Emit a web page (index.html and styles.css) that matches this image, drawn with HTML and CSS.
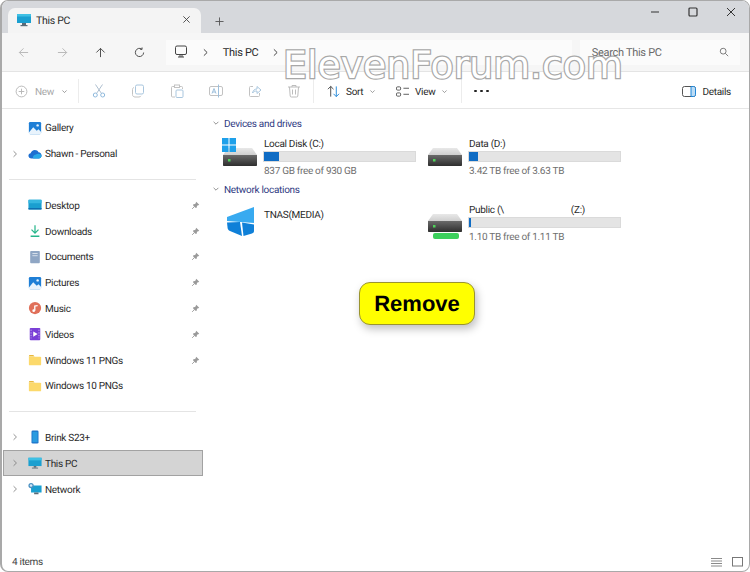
FILE: index.html
```html
<!DOCTYPE html>
<html lang="en">
<head>
    <meta charset="UTF-8">
    <title>This PC</title>
    <link rel="stylesheet" href="styles.css">
</head>
<body>

    <svg class="defs" width="0" height="0">
        <defs>
            <symbol id="chev" viewBox="0 0 10 10"><path d="M3.2 1.5 6.8 5 3.2 8.5" fill="none" stroke="currentColor" stroke-width="1"/></symbol>
            <symbol id="down" viewBox="0 0 10 10"><path d="M2 3.5 5 6.5 8 3.5" fill="none" stroke="currentColor" stroke-width="1"/></symbol>
            <symbol id="pin" viewBox="0 0 12 12"><path d="M7 1 11 5 9.8 5.6 8 6.4 7.6 9 5.8 9 3 6.2 3 4.4 5.6 4 6.4 2.2Z" fill="#9a9a9a"/><path d="M4.2 7.8 1.5 10.5" stroke="#9a9a9a" stroke-width="1.2"/></symbol>
            <symbol id="folder" viewBox="0 0 16 14"><path d="M1 2.5C1 1.7 1.5 1.2 2.2 1.2H6L7.6 3H1Z" fill="#e8b83c"/><path d="M1 3.2H14C14.6 3.2 15 3.6 15 4.2V12C15 12.6 14.6 13 14 13H2C1.4 13 1 12.6 1 12Z" fill="#fcd96b"/></symbol>
            <symbol id="picture" viewBox="0 0 16 16"><rect x="1" y="1" width="14" height="14" rx="1.5" fill="#1f7fd6"/><path d="M1 13 6 7l4 4 2-1.5 3 3V15H1Z" fill="#e8f3fc"/><circle cx="11" cy="5" r="1.4" fill="#e8f3fc"/></symbol>
            <linearGradient id="roof" x1="0" y1="0" x2="0" y2="1"><stop offset="0" stop-color="#e8e8e8"/><stop offset="1" stop-color="#cfcfcf"/></linearGradient>
            <linearGradient id="front" x1="0" y1="0" x2="0" y2="1"><stop offset="0" stop-color="#6a6a6a"/><stop offset="1" stop-color="#2e2e2e"/></linearGradient>
            <symbol id="drive" viewBox="0 0 34 18"><path d="M5 0H29L34 7H0Z" fill="url(#roof)"/><path d="M0 7H34V17C34 17.6 33.6 18 33 18H1C.4 18 0 17.6 0 17Z" fill="url(#front)"/><rect x="5" y="11" width="2.5" height="2.5" fill="#4fd35a"/></symbol>
        </defs>
    </svg>

    <div class="window">

        <!-- Title bar -->
        <div class="titlebar">
            <div class="tab">
                <svg class="tab-icon" viewBox="0 0 16 14"><rect x="1" y="1" width="14" height="9" fill="#1a9fd0"/><path d="M1 1H15V3.5H1Z" fill="#3fc0e4"/><rect x="6" y="10" width="4" height="2" fill="#5a6b78"/><rect x="4.5" y="12" width="7" height="1.2" fill="#5a6b78"/></svg>
                <span class="tab-title">This PC</span>
                <svg class="tab-close" viewBox="0 0 10 10"><path d="M1.5 1.5 8.5 8.5M8.5 1.5 1.5 8.5" stroke="#444" stroke-width="1"/></svg>
            </div>
            <svg class="tab-new" viewBox="0 0 10 10"><path d="M5 .5V9.5M.5 5H9.5" stroke="#555" stroke-width="1"/></svg>
            <div class="caption">
                <svg viewBox="0 0 10 10"><path d="M1 5H9" stroke="#333" stroke-width="1"/></svg>
                <svg viewBox="0 0 10 10"><rect x="1" y="1" width="8" height="8" rx="1" fill="none" stroke="#333" stroke-width="1.2"/></svg>
                <svg viewBox="0 0 10 10"><path d="M1 1 9 9M9 1 1 9" stroke="#333" stroke-width="1"/></svg>
            </div>
        </div>

        <!-- Address row -->
        <div class="addressrow">
            <div class="navbtn"><svg viewBox="0 0 12 12"><path d="M11 6H1.5M6 1.5 1.5 6 6 10.5" fill="none" stroke="#b4b4b4"/></svg></div>
            <div class="navbtn"><svg viewBox="0 0 12 12"><path d="M1 6H10.5M6 1.5 10.5 6 6 10.5" fill="none" stroke="#b4b4b4"/></svg></div>
            <div class="navbtn"><svg viewBox="0 0 12 12"><path d="M6 11V1.5M1.5 6 6 1.5 10.5 6" fill="none" stroke="#444"/></svg></div>
            <div class="navbtn"><svg viewBox="0 0 12 12"><path d="M10.5 6A4.5 4.5 0 1 1 8.5 2.2M8.8 .5V2.6H6.7" fill="none" stroke="#444"/></svg></div>
            <div class="addressbox">
                <svg class="addr-pc" viewBox="0 0 14 14"><rect x="1.5" y="1" width="11" height="8.5" rx="1.5" fill="none" stroke="#444" stroke-width="1"/><path d="M4 12H10M6 9.5V12M8 9.5V12" stroke="#444" stroke-width="1"/></svg>
                <svg class="addr-chev" viewBox="0 0 10 10"><use href="#chev"/></svg>
                <span>This PC</span>
                <svg class="addr-chev" viewBox="0 0 10 10"><use href="#chev"/></svg>
            </div>
            <div class="searchbox">
                <span>Search This PC</span>
                <svg viewBox="0 0 12 12"><circle cx="5" cy="5" r="3.5" fill="none" stroke="#666"/><path d="M7.6 7.6 11 11" stroke="#666"/></svg>
            </div>
        </div>

        <!-- Command bar -->
        <div class="toolbar">
            <div class="tool-new">
                <svg class="tool-icon" viewBox="0 0 14 14"><circle cx="7" cy="7" r="5.8" fill="none" stroke="#b5b5b5"/><path d="M7 4V10M4 7H10" stroke="#b5b5b5"/></svg>
                <span>New</span>
                <svg class="drop" viewBox="0 0 10 10"><use href="#down"/></svg>
            </div>
            <div class="sep"></div>
            <div class="tool"><svg viewBox="0 0 14 14"><path d="M3.5 .5 9.5 9.5M10.5 .5 4.5 9.5" fill="none" stroke="#aebfd0"/><circle cx="3.3" cy="11" r="2" fill="none" stroke="#8fb9dc"/><circle cx="10.7" cy="11" r="2" fill="none" stroke="#8fb9dc"/></svg></div>
            <div class="tool"><svg viewBox="0 0 14 14"><rect x="4.5" y="1" width="8" height="9" rx="1.5" fill="none" stroke="#a9c6de"/><path d="M3 3.5C1.8 4 1.5 4.5 1.5 5.5V10.5C1.5 12 2.5 13 4 13H8C9 13 9.7 12.5 10 11.8" fill="none" stroke="#c2c2c2"/></svg></div>
            <div class="tool"><svg viewBox="0 0 14 14"><path d="M4.5 2.5H2.5C1.8 2.5 1.5 2.8 1.5 3.5V12C1.5 12.7 1.8 13 2.5 13H5M9.5 2.5H11.5C12.2 2.5 12.5 2.8 12.5 3.5V5" fill="none" stroke="#c2c2c2"/><rect x="4.5" y="1" width="5" height="2.5" fill="none" stroke="#c2c2c2"/><rect x="6" y="6" width="7" height="7.5" rx="1" fill="none" stroke="#a9c6de"/></svg></div>
            <div class="tool"><svg viewBox="0 0 14 14"><rect x=".5" y="2.5" width="13" height="9" rx="1.5" fill="none" stroke="#c2c2c2"/><path d="M3 9.5 5 4.5 7 9.5M3.8 8H6.2" fill="none" stroke="#9dbfdc"/><path d="M9.5 .5V13.5" stroke="#9dbfdc"/></svg></div>
            <div class="tool"><svg viewBox="0 0 14 14"><path d="M5 2.5H2.5C1.8 2.5 1.5 2.8 1.5 3.5V11.5C1.5 12.2 1.8 12.5 2.5 12.5H10.5C11.2 12.5 11.5 12.2 11.5 11.5V9" fill="none" stroke="#c2c2c2"/><path d="M4.5 9C5 6.5 6.5 5 9 5V2.5L13 6 9 9.5V7C7 7 5.5 7.5 4.5 9Z" fill="none" stroke="#a9c6de"/></svg></div>
            <div class="tool"><svg viewBox="0 0 14 14"><path d="M1 3H13M5 3V1.5H9V3M2.5 3 3.2 12C3.3 12.8 3.7 13 4.3 13H9.7C10.3 13 10.7 12.8 10.8 12L11.5 3M5.5 5.5V10.5M8.5 5.5V10.5" fill="none" stroke="#bcbcbc"/></svg></div>
            <div class="sep"></div>
            <div class="tool-label tool-sort">
                <svg class="tool-icon" viewBox="0 0 14 14"><path d="M4 12.5V1.5M1 4.5 4 1.5 7 4.5" fill="none" stroke="#444"/><path d="M10 1.5V12.5M7 9.5 10 12.5 13 9.5" fill="none" stroke="#1f86d8"/></svg>
                <span>Sort</span>
                <svg class="drop" viewBox="0 0 10 10"><use href="#down"/></svg>
            </div>
            <div class="tool-label tool-view">
                <svg class="tool-icon" viewBox="0 0 14 14"><rect x=".5" y="2" width="4.5" height="3.5" rx="1.2" fill="none" stroke="#555"/><rect x=".5" y="8.5" width="4.5" height="3.5" rx="1.2" fill="none" stroke="#555"/><path d="M8 3.5H14M8 10H14" stroke="#555"/></svg>
                <span>View</span>
                <svg class="drop" viewBox="0 0 10 10"><use href="#down"/></svg>
            </div>
            <div class="sep"></div>
            <div class="tool-more"><i></i><i></i><i></i></div>
            <div class="tool-details">
                <svg class="tool-icon" viewBox="0 0 14 12"><rect x=".5" y="1" width="13" height="10" rx="2" fill="none" stroke="#555"/><path d="M9 1H11.5C12.8 1 13.5 1.8 13.5 3V9C13.5 10.2 12.8 11 11.5 11H9Z" fill="#bcdcf5" stroke="#1f86d8"/></svg>
                <span>Details</span>
            </div>
        </div>

        <div class="main">

            <!-- Navigation pane -->
            <div class="sidebar">
                <div class="navrow">
                    <span class="expander"></span>
                    <svg class="navicon" viewBox="0 0 16 16"><use href="#picture"/></svg>
                    <span class="navname">Gallery</span>
                </div>
                <div class="navrow">
                    <svg class="expander" viewBox="0 0 10 10"><use href="#chev"/></svg>
                    <svg class="navicon" viewBox="0 0 16 16"><path d="M4 13C2 13 .5 11.8 .5 10C.5 8.4 1.7 7.4 3 7.2 3.7 5 5.5 3.5 7.8 3.5 9.8 3.5 11.3 4.5 12 6 14 6.2 15.5 7.8 15.5 9.7 15.5 11.8 14 13 12.3 13Z" fill="#1d6fd1"/><path d="M6 13C5 11 6.3 8.7 9 8.5 11 7 15 7.5 15.5 10 15.5 11.8 14 13 12.3 13Z" fill="#29a8e8"/></svg>
                    <span class="navname">Shawn - Personal</span>
                </div>
                <div class="navdivider"></div>
                <div class="navrow">
                    <span class="expander"></span>
                    <svg class="navicon" viewBox="0 0 16 16"><rect x=".5" y="2" width="15" height="11" rx="1" fill="#1a9fd0"/><path d="M.5 2H15.5V6H.5Z" fill="#36b7e0"/><path d="M.5 11.5H15.5V13H.5Z" fill="#0f6fb0"/></svg>
                    <span class="navname">Desktop</span>
                    <svg class="pin" viewBox="0 0 12 12"><use href="#pin"/></svg>
                </div>
                <div class="navrow">
                    <span class="expander"></span>
                    <svg class="navicon" viewBox="0 0 16 16"><path d="M8 1.5V10M4 6.5 8 10.5 12 6.5" fill="none" stroke="#25b58a" stroke-width="1.4"/><path d="M3 14H13" stroke="#25b58a" stroke-width="1.5"/></svg>
                    <span class="navname">Downloads</span>
                    <svg class="pin" viewBox="0 0 12 12"><use href="#pin"/></svg>
                </div>
                <div class="navrow">
                    <span class="expander"></span>
                    <svg class="navicon" viewBox="0 0 16 16"><rect x="2.5" y="1" width="11" height="14" rx="1" fill="#8fa6c4"/><path d="M5 4H11M5 6.5H11" stroke="#dfe6ef"/></svg>
                    <span class="navname">Documents</span>
                    <svg class="pin" viewBox="0 0 12 12"><use href="#pin"/></svg>
                </div>
                <div class="navrow">
                    <span class="expander"></span>
                    <svg class="navicon" viewBox="0 0 16 16"><use href="#picture"/></svg>
                    <span class="navname">Pictures</span>
                    <svg class="pin" viewBox="0 0 12 12"><use href="#pin"/></svg>
                </div>
                <div class="navrow">
                    <span class="expander"></span>
                    <svg class="navicon" viewBox="0 0 16 16"><circle cx="8" cy="8" r="7" fill="#e0705a"/><path d="M7 11V5L11 4.5V6L8.5 6.3V11" fill="#fff"/><circle cx="6.5" cy="11" r="1.5" fill="#fff"/></svg>
                    <span class="navname">Music</span>
                    <svg class="pin" viewBox="0 0 12 12"><use href="#pin"/></svg>
                </div>
                <div class="navrow">
                    <span class="expander"></span>
                    <svg class="navicon" viewBox="0 0 16 16"><rect x="2" y="1" width="12" height="14" rx="1" fill="#7a3fd6"/><path d="M6 5 11 8 6 11Z" fill="#fff"/><path d="M3.5 3V13M12.5 3V13" stroke="#c9b2f0" stroke-dasharray="1.5 1.5"/></svg>
                    <span class="navname">Videos</span>
                    <svg class="pin" viewBox="0 0 12 12"><use href="#pin"/></svg>
                </div>
                <div class="navrow">
                    <span class="expander"></span>
                    <svg class="navicon" viewBox="0 0 16 14"><use href="#folder"/></svg>
                    <span class="navname">Windows 11 PNGs</span>
                    <svg class="pin" viewBox="0 0 12 12"><use href="#pin"/></svg>
                </div>
                <div class="navrow">
                    <span class="expander"></span>
                    <svg class="navicon" viewBox="0 0 16 14"><use href="#folder"/></svg>
                    <span class="navname">Windows 10 PNGs</span>
                </div>
                <div class="navdivider"></div>
                <div class="navrow">
                    <svg class="expander" viewBox="0 0 10 10"><use href="#chev"/></svg>
                    <svg class="navicon" viewBox="0 0 16 16"><rect x="4" y=".5" width="8" height="15" rx="1.5" fill="#1d72c9"/><rect x="5" y="2" width="6" height="12" fill="#2a9be0"/></svg>
                    <span class="navname">Brink S23+</span>
                </div>
                <div class="navrow selected">
                    <svg class="expander" viewBox="0 0 10 10"><use href="#chev"/></svg>
                    <svg class="navicon" viewBox="0 0 16 14"><rect x=".5" y="1" width="15" height="9.5" fill="#1a9fd0"/><path d="M.5 1H15.5V4H.5Z" fill="#3fc0e4"/><rect x="6.5" y="10.5" width="3" height="1.8" fill="#5a6b78"/><rect x="4.5" y="12.3" width="7" height="1" fill="#5a6b78"/></svg>
                    <span class="navname">This PC</span>
                </div>
                <div class="navrow">
                    <svg class="expander" viewBox="0 0 10 10"><use href="#chev"/></svg>
                    <svg class="navicon" viewBox="0 0 16 16"><rect x="3.5" y="4" width="12" height="8" fill="#1a9fd0"/><rect x="7" y="12" width="5" height="2" fill="#5a6b78"/><circle cx="3.5" cy="4" r="3" fill="#4a90c2"/><circle cx="3.5" cy="4" r="1.5" fill="#d5e8f5"/></svg>
                    <span class="navname">Network</span>
                </div>
            </div>

            <!-- Content -->
            <div class="content">
                <div class="group">
                    <svg viewBox="0 0 10 10"><use href="#down"/></svg>
                    <span>Devices and drives</span>
                </div>
                <div class="tiles">
                    <div class="tile">
                        <div class="tile-icon">
                            <svg class="winlogo" viewBox="0 0 14 14"><path d="M0 0H6.5V6.5H0ZM7.5 0H14V6.5H7.5ZM0 7.5H6.5V14H0ZM7.5 7.5H14V14H7.5Z" fill="#1ea0ea"/></svg>
                            <svg class="drive" viewBox="0 0 34 18"><use href="#drive"/></svg>
                        </div>
                        <div class="tile-text">
                            <div class="tile-name">Local Disk (C:)</div>
                            <div class="bar"><div class="bar-fill" style="width: 10%"></div></div>
                            <div class="tile-free">837 GB free of 930 GB</div>
                        </div>
                    </div>
                    <div class="tile">
                        <div class="tile-icon">
                            <svg class="drive" viewBox="0 0 34 18"><use href="#drive"/></svg>
                        </div>
                        <div class="tile-text">
                            <div class="tile-name">Data (D:)</div>
                            <div class="bar"><div class="bar-fill" style="width: 6%"></div></div>
                            <div class="tile-free">3.42 TB free of 3.63 TB</div>
                        </div>
                    </div>
                </div>
                <div class="group">
                    <svg viewBox="0 0 10 10"><use href="#down"/></svg>
                    <span>Network locations</span>
                </div>
                <div class="tiles">
                    <div class="tile">
                        <div class="tile-icon tile-icon-nas">
                            <svg class="nas" viewBox="0 0 27 29"><path d="M0 10 27 0V16L0 14Z" fill="#38aaf0"/><path d="M0 15.5 13 15 15 29 3 24C1.5 23.3 .8 22.5 .6 21Z" fill="#0f80d8"/><path d="M15 15.5 27 17.5V24C27 25.5 26 26 25 26.5L16.5 29Z" fill="#0f80d8"/></svg>
                        </div>
                        <div class="tile-text tile-text-nas">
                            <div class="tile-name">TNAS(MEDIA)</div>
                        </div>
                    </div>
                    <div class="tile">
                        <div class="tile-icon">
                            <svg class="drive" viewBox="0 0 34 18"><use href="#drive"/></svg>
                            <div class="netbar"></div>
                        </div>
                        <div class="tile-text">
                            <div class="tile-name">Public (\<span class="redact"></span>(Z:)</div>
                            <div class="bar"><div class="bar-fill" style="width: 1.5%"></div></div>
                            <div class="tile-free">1.10 TB free of 1.11 TB</div>
                        </div>
                    </div>
                </div>
            </div>
        </div>

        <!-- Status bar -->
        <div class="statusbar">
            <span>4 items</span>
            <div class="viewbtns">
                <svg viewBox="0 0 11 10"><path d="M0 1.5H11M0 4H11M0 6.5H11M0 9H11" stroke="#8a8a8a"/></svg>
                <svg viewBox="0 0 11 10"><rect x=".5" y=".5" width="10" height="8.5" fill="none" stroke="#777"/></svg>
            </div>
        </div>

        <div class="watermark">ElevenForum.com</div>
        <div class="callout">Remove</div>
    </div>

</body>
</html>
```

FILE: styles.css
```css
body {
    margin: 0;
    padding: 0;
    background-color: #fff;
    font-family: Roboto, "Noto Sans", sans-serif;
    font-size: 10px;
    letter-spacing: -0.3px;
    color: #2a2a2a;
    text-rendering: geometricPrecision;
}

.defs {
    position: absolute;
}

svg {
    display: block;
    flex-shrink: 0;
}

.window {
    position: relative;
    width: 750px;
    height: 572px;
    box-sizing: border-box;
    display: flex;
    flex-direction: column;
    border: 1px solid #a9a9a9;
    border-left: 2px solid #a9a9a9;
    border-radius: 8px;
    overflow: hidden;
    background-color: #fff;
}

/* title bar */
.titlebar {
    height: 32px;
    flex-shrink: 0;
    display: flex;
    align-items: flex-end;
    padding-left: 6px;
    background-color: #d6d8dc;
}

.tab {
    width: 193px;
    height: 25px;
    box-sizing: border-box;
    display: flex;
    align-items: center;
    padding: 0 10px 2px 8px;
    background-color: #f4f4f4;
    border-radius: 7px 7px 0 0;
}

.tab-icon {
    width: 16px;
    height: 14px;
}

.tab-title {
    margin-left: 4px;
    padding-top: 2px;
    flex: 1;
    font-size: 10.5px;
}

.tab-close {
    width: 9px;
    height: 9px;
}

.tab-new {
    width: 9px;
    height: 9px;
    margin: 0 0 7px 14px;
}

.caption {
    margin-left: auto;
    align-self: flex-start;
    display: flex;
    gap: 28px;
    padding: 6px 13px 0 0;
}

.caption svg {
    width: 10px;
    height: 10px;
}

/* address row */
.addressrow {
    height: 39px;
    flex-shrink: 0;
    box-sizing: border-box;
    display: flex;
    align-items: center;
    padding: 0 9px 0 2px;
    background-color: #f6f6f6;
    border-bottom: 1px solid #e4e4e4;
}

.navbtn {
    width: 38.7px;
    display: flex;
    justify-content: center;
}

.navbtn svg {
    width: 11px;
    height: 11px;
}

.addressbox {
    width: 406px;
    height: 25px;
    margin-left: 7px;
    display: flex;
    align-items: center;
    padding-left: 8px;
    box-sizing: border-box;
    background-color: #fbfbfb;
    font-size: 11px;
}

.addr-pc {
    width: 14px;
    height: 14px;
}

.addr-chev {
    width: 9px;
    height: 9px;
    margin: 0 13px;
    color: #333;
}

.searchbox {
    flex: 1;
    height: 25px;
    margin-left: 8px;
    display: flex;
    align-items: center;
    justify-content: space-between;
    padding: 0 11px 0 12px;
    box-sizing: border-box;
    background-color: #fbfbfb;
    color: #6a6a6a;
    font-size: 11px;
}

.searchbox span {
    position: relative;
    z-index: 2;
}

.searchbox svg {
    width: 10px;
    height: 10px;
}

/* command bar */
.toolbar {
    height: 37px;
    flex-shrink: 0;
    box-sizing: border-box;
    display: flex;
    align-items: center;
    padding-top: 2px;
    background-color: #fff;
    border-bottom: 1px solid #e6e6e6;
}

.toolbar span {
    padding-top: 2px;
}

.sep {
    width: 1px;
    height: 24px;
    background-color: #ececec;
    flex-shrink: 0;
}

.tool-icon {
    width: 13px;
    height: 13px;
}

.drop {
    width: 7px;
    height: 7px;
    color: #777;
}

.tool-new {
    width: 76px;
    box-sizing: border-box;
    display: flex;
    align-items: center;
    gap: 7px;
    padding-left: 13px;
    color: #a8a8a8;
}

.tool {
    width: 39px;
    display: flex;
    justify-content: center;
}

.tool svg {
    width: 14px;
    height: 14px;
}

.tool-label {
    display: flex;
    align-items: center;
    gap: 6px;
}

.tool-sort {
    width: 51px;
    margin-left: 13px;
}

.tool-view {
    width: 65px;
    margin-left: 18px;
}

.tool-more {
    display: flex;
    gap: 3.5px;
    margin-left: 12px;
}

.tool-more i {
    width: 2.5px;
    height: 2.5px;
    border-radius: 50%;
    background-color: #222;
}

.tool-details {
    margin-left: auto;
    padding-right: 18px;
    display: flex;
    align-items: center;
    gap: 6px;
}

.tool-details .tool-icon {
    width: 14px;
}

/* main area */
.main {
    flex: 1;
    display: flex;
    min-height: 0;
}

.sidebar {
    width: 201px;
    flex-shrink: 0;
    box-sizing: border-box;
    padding: 6px 0 0 1px;
}

.navrow {
    height: 25.8px;
    box-sizing: border-box;
    display: flex;
    align-items: center;
    padding-left: 8px;
}

.navrow.selected {
    background-color: #d4d4d4;
    border: 1px solid #a2a2a2;
    padding-left: 7px;
}

.navdivider {
    height: 25.8px;
    box-sizing: border-box;
    margin: 0 7px 0 6px;
    background: linear-gradient(#e4e4e4, #e4e4e4) center / 100% 1px no-repeat;
}

.expander {
    width: 8px;
    height: 8px;
    color: #777;
    flex-shrink: 0;
}

.navicon {
    width: 14px;
    height: 14px;
    margin-left: 9px;
}

.navname {
    margin-left: 3px;
    padding-top: 2px;
    flex: 1;
    white-space: nowrap;
}

.pin {
    width: 9px;
    height: 9px;
    margin-right: 3px;
}

/* content */
.content {
    flex: 1;
    padding: 5px 0 0 9px;
}

.group {
    height: 18px;
    display: flex;
    align-items: center;
    gap: 4px;
    color: #2f3a82;
}

.group span {
    padding-top: 2px;
}

.group svg {
    width: 8px;
    height: 8px;
    color: #777;
}

.tiles {
    display: flex;
    height: 48px;
}

.tile {
    width: 205px;
    display: flex;
}

.tile-icon {
    width: 51px;
    flex-shrink: 0;
    position: relative;
    padding: 16px 0 0 11px;
    box-sizing: border-box;
}

.tile-icon-nas {
    padding: 9px 0 0 15px;
}

.winlogo {
    position: absolute;
    left: 10px;
    top: 6px;
    width: 14px;
    height: 14px;
}

.drive {
    width: 34px;
    height: 18px;
}

.nas {
    width: 27px;
    height: 29px;
}

.netbar {
    width: 26px;
    height: 6px;
    margin: 1px 0 0 5px;
    border-radius: 2px;
    background-color: #3ccf5c;
}

.tile-text {
    width: 153px;
    padding-top: 4px;
}

.tile-text-nas {
    padding-top: 9px;
}

.tile-name {
    height: 15px;
    line-height: 17px;
    padding-left: 1px;
    white-space: nowrap;
}

.redact {
    display: inline-block;
    width: 67px;
}

.bar {
    height: 11px;
    background-color: #e4e4e4;
    border: 1px solid #dadada;
    box-sizing: border-box;
}

.bar-fill {
    height: 100%;
    background-color: #0f6cc4;
}

.tile-free {
    margin-top: 3px;
    padding-left: 1px;
    line-height: 14px;
    color: #6f6f6f;
    white-space: nowrap;
}

/* status bar */
.statusbar {
    height: 22px;
    flex-shrink: 0;
    box-sizing: border-box;
    display: flex;
    align-items: center;
    justify-content: space-between;
    padding: 3px 6px 0 10px;
    color: #444;
}

.statusbar span {
    padding-top: 2px;
}

.viewbtns {
    display: flex;
    gap: 10px;
}

.viewbtns svg {
    width: 11px;
    height: 10px;
}

/* overlays */
.watermark {
    position: absolute;
    left: 281px;
    top: 42px;
    font-family: "DejaVu Sans", sans-serif;
    font-size: 37.8px;
    line-height: 44px;
    letter-spacing: normal;
    color: #fff;
    -webkit-text-stroke: 2.5px #a8a8a8;
    paint-order: stroke fill;
    white-space: nowrap;
}

.callout {
    position: absolute;
    left: 357px;
    top: 281px;
    width: 116px;
    height: 43px;
    box-sizing: border-box;
    display: flex;
    align-items: center;
    justify-content: center;
    background-color: #ffff00;
    border: 1px solid #9a9430;
    border-radius: 11px;
    box-shadow: 2px 4px 8px rgba(0, 0, 0, 0.25);
    font-family: "Liberation Sans", Arial, sans-serif;
    font-size: 22px;
    font-weight: bold;
    letter-spacing: normal;
    color: #000;
}
```
